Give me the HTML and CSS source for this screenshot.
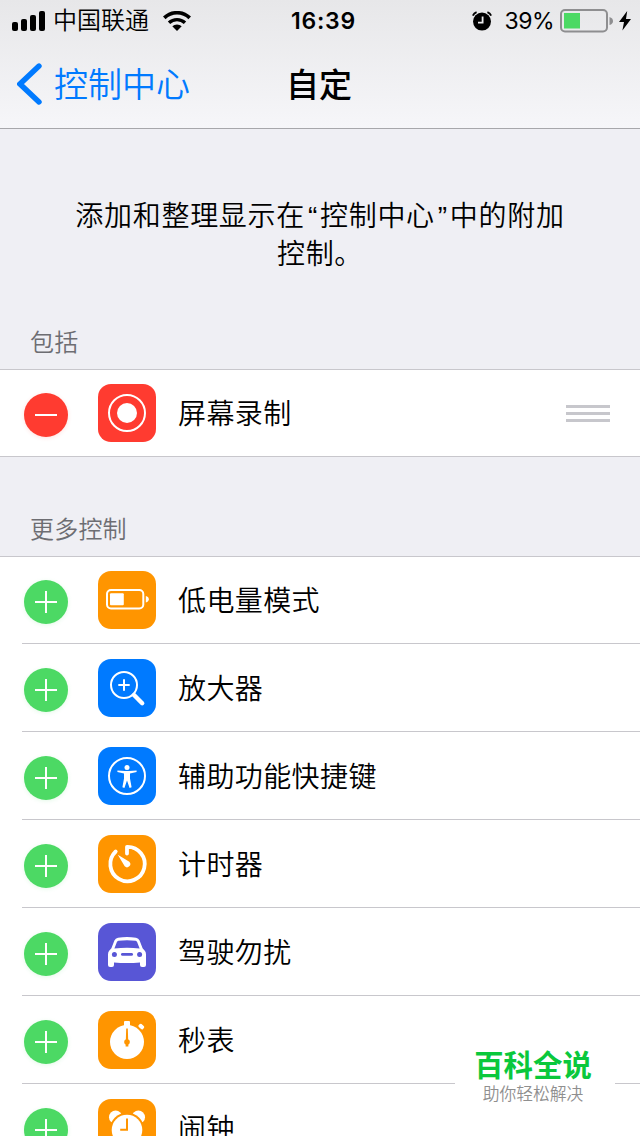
FILE: index.html
```html
<!DOCTYPE html>
<html lang="zh-CN">
<head>
    <meta charset="utf-8">
    <meta name="viewport" content="width=device-width, initial-scale=1.0">
    <title>自定</title>
    <link rel="stylesheet" href="styles.css">
</head>
<body>

<div class="header">
    <div class="status-bar">
        <div class="status-left">
            <svg class="signal" width="33" height="20" viewBox="0 0 33 20">
                <rect x="0" y="11" width="6" height="9" rx="2"/>
                <rect x="9" y="8" width="6" height="12" rx="2"/>
                <rect x="18" y="4" width="6" height="16" rx="2"/>
                <rect x="27" y="0" width="6" height="20" rx="2"/>
            </svg>
            <span class="carrier">中国联通</span>
            <svg class="wifi" width="28" height="20" viewBox="0 0 28 20">
                <path d="M1.3 6.9A18.2 18.2 0 0 1 26.7 6.9" fill="none" stroke="#000" stroke-width="3.7"/>
                <path d="M6 11.8A11.6 11.6 0 0 1 22 11.8" fill="none" stroke="#000" stroke-width="3.4"/>
                <path d="M9.3 15.3A6.8 6.8 0 0 1 18.7 15.3L14 20z"/>
            </svg>
        </div>
        <div class="time">16:39</div>
        <div class="status-right">
            <svg class="alarm" width="20" height="20" viewBox="0 0 20 20">
                <circle cx="10" cy="10.6" r="9"/>
                <path d="M.8 4.6Q2 2.2 4.6 1.2M19.2 4.6Q18 2.2 15.4 1.2" fill="none" stroke="#000" stroke-width="1.8"/>
                <path d="M10.6 5.5V11.6H6" fill="none" stroke="#ebebed" stroke-width="1.8"/>
            </svg>
            <span class="percent">39%</span>
            <svg class="battery" width="54" height="24" viewBox="0 0 54 24">
                <rect x="1" y="1" width="46" height="21.5" rx="4" fill="none" stroke="#8e8e90" stroke-width="2"/>
                <rect x="4" y="4" width="16" height="15.5" fill="#4cd964"/>
                <path d="M49.5 8Q53 9 53 12T49.5 16z" fill="#8e8e90"/>
            </svg>
            <svg class="bolt" width="12" height="20" viewBox="0 0 12 20">
                <path d="M8.2 0L0 11H5L3.4 19.5L12 8H7z"/>
            </svg>
        </div>
    </div>
    <div class="nav">
        <div class="back">
            <svg width="25" height="42" viewBox="0 0 25 42">
                <path d="M22 3L3 21L22 39" fill="none" stroke="#007aff" stroke-width="5.4" stroke-linecap="round"/>
            </svg>
            <span>控制中心</span>
        </div>
        <div class="title">自定</div>
    </div>
</div>

<p class="intro">添加和整理显示在<span class="quote">“</span>控制中心<span class="quote">”</span>中的附加<br>控制。</p>

<h2 class="group-title">包括</h2>
<div class="list">
    <div class="row">
        <svg class="toggle remove" viewBox="0 0 44 44"><path d="M11 22H33"/></svg>
        <svg class="icon red" viewBox="0 0 58 58">
            <circle class="line" cx="29" cy="29" r="18"/>
            <circle cx="29" cy="29" r="10"/>
        </svg>
        <span class="name">屏幕录制</span>
        <div class="handle"><i></i><i></i><i></i></div>
    </div>
</div>

<h2 class="group-title more">更多控制</h2>
<div class="list">
    <div class="row">
        <svg class="toggle" viewBox="0 0 44 44"><path d="M11 22H33M22 11V33"/></svg>
        <svg class="icon orange" viewBox="0 0 58 58">
            <rect class="line" x="9" y="19" width="36.3" height="18.4" rx="4"/>
            <rect x="12" y="22.2" width="13.8" height="12" rx="1"/>
            <path d="M47.8 25Q50.8 25.8 50.8 28.2T47.8 31.4z"/>
        </svg>
        <span class="name">低电量模式</span>
    </div>
    <div class="row">
        <svg class="toggle" viewBox="0 0 44 44"><path d="M11 22H33M22 11V33"/></svg>
        <svg class="icon blue" viewBox="0 0 58 58">
            <circle class="line" cx="26" cy="26" r="13"/>
            <path class="line" d="M20.3 26H31.7M26 20.3V31.7"/>
            <path class="grip" d="M36 36L44.2 44.2"/>
        </svg>
        <span class="name">放大器</span>
    </div>
    <div class="row">
        <svg class="toggle" viewBox="0 0 44 44"><path d="M11 22H33M22 11V33"/></svg>
        <svg class="icon blue" viewBox="0 0 58 58">
            <circle class="line" cx="29" cy="29" r="18"/>
            <circle cx="29" cy="20.4" r="2.5"/>
            <path d="M19.4 23.5L27 24.1H31L38.6 23.5V25.1L32 26.5V31.5L33.6 40.3L31.6 41L29 33.5L26.4 41L24.4 40.3L26 31.5V26.5L19.4 25.1z"/>
        </svg>
        <span class="name">辅助功能快捷键</span>
    </div>
    <div class="row">
        <svg class="toggle" viewBox="0 0 44 44"><path d="M11 22H33M22 11V33"/></svg>
        <svg class="icon orange" viewBox="0 0 58 58">
            <path class="line thick" d="M29 18.5V11.8A17.2 17.2 0 1 1 17.7 16.5"/>
            <path d="M19.8 19.8L31.3 26.7A3.2 3.2 0 0 1 26.7 31.3z"/>
        </svg>
        <span class="name">计时器</span>
    </div>
    <div class="row">
        <svg class="toggle" viewBox="0 0 44 44"><path d="M11 22H33M22 11V33"/></svg>
        <svg class="icon purple" viewBox="0 0 58 58">
            <path fill-rule="evenodd" d="M20 14.8Q29 13.4 38 14.8Q40.6 15.2 41.6 17.6L44.6 25.2L47 28Q48 29.5 48 31.4V42A2 2 0 0 1 46 44H44A2 2 0 0 1 42 42V39.4Q29 40.6 16 39.4V42A2 2 0 0 1 14 44H12A2 2 0 0 1 10 42V31.4Q10 29.5 11 28L13.4 25.2L16.4 17.6Q17.4 15.2 20 14.8zM20.4 17.8Q19.3 18 18.9 19L16.4 25.6Q29 23.8 41.6 25.6L39.1 19Q38.7 18 37.6 17.8Q29 16.6 20.4 17.8z"/>
            <g fill="#5856d6">
                <circle cx="16.4" cy="31.4" r="2.5"/>
                <circle cx="41.6" cy="31.4" r="2.5"/>
                <rect x="23" y="30" width="12" height="2.8" rx="1.4"/>
            </g>
        </svg>
        <span class="name">驾驶勿扰</span>
    </div>
    <div class="row">
        <svg class="toggle" viewBox="0 0 44 44"><path d="M11 22H33M22 11V33"/></svg>
        <svg class="icon orange" viewBox="0 0 58 58">
            <circle cx="29" cy="31" r="17"/>
            <rect x="26" y="10" width="6" height="6" rx="1"/>
            <rect x="40.4" y="13.6" width="5.8" height="4" rx="1.4" transform="rotate(42 43.3 15.6)"/>
            <g fill="#ff9500">
                <path d="M28.2 17.5H29.8L30.4 35.5H27.6z"/>
                <circle cx="29" cy="31" r="2.8"/>
            </g>
        </svg>
        <span class="name">秒表</span>
    </div>
    <div class="row">
        <svg class="toggle" viewBox="0 0 44 44"><path d="M11 22H33M22 11V33"/></svg>
        <svg class="icon orange" viewBox="0 0 58 58">
            <circle cx="17.6" cy="18.2" r="6.6"/>
            <circle cx="40.4" cy="18.2" r="6.6"/>
            <circle cx="29" cy="31" r="17.4" fill="#ff9500"/>
            <circle cx="29" cy="31" r="15.3"/>
            <path d="M29 19.5V30.7H22.2" fill="none" stroke="#ff9500" stroke-width="2"/>
        </svg>
        <span class="name">闹钟</span>
    </div>
</div>

<div class="watermark">
    <div class="watermark-title">百科全说</div>
    <div class="watermark-text">助你轻松解决</div>
</div>

</body>
</html>
```

FILE: styles.css
```css
body {
    font-family: Inter, "Noto Sans CJK SC", sans-serif;
    font-weight: 350;
    margin: 0;
    position: relative;
    width: 640px;
    height: 1136px;
    overflow: hidden;
    background: #efeff4;
    color: #000;
}
.header {
    box-sizing: border-box;
    height: 129px;
    background: linear-gradient(#e7e7e9, #f6f6f9);
    border-bottom: 1px solid #a7a7ab;
}
.status-bar {
    display: grid;
    grid-template-columns: 1fr auto 1fr;
    align-items: center;
    height: 40px;
    padding: 0 9px 0 12px;
}
.status-left, .status-right {
    display: flex;
    align-items: center;
}
.status-right {
    justify-content: flex-end;
}
.carrier {
    margin: 0 14px 0 8px;
    font-size: 24px;
    line-height: 42px;
}
.time {
    font-size: 23px;
    font-weight: 600;
    letter-spacing: 0.8px;
    line-height: 42px;
    padding-left: 4px;
}
.percent {
    margin: 0 6px 0 12px;
    font-size: 23px;
    font-weight: 400;
    letter-spacing: -0.5px;
    line-height: 42px;
}
.battery {
    margin-right: 5px;
}
.nav {
    display: grid;
    grid-template-columns: 1fr auto 1fr;
    align-items: center;
    height: 88px;
    padding: 0 18px 0 17px;
}
.back {
    display: flex;
    align-items: center;
    gap: 12px;
    color: #007aff;
    font-size: 34px;
}
.back span {
    padding-top: 2px;
    line-height: 86px;
}
.title {
    padding: 0 1px 2px 0;
    font-size: 33px;
    font-weight: 500;
}
.intro {
    margin: 68px 0 0;
    text-align: center;
    font-size: 28px;
    letter-spacing: 0.7px;
    line-height: 38px;
}
.quote {
    padding: 0 2px 0 3px;
    font-family: "Liberation Sans", sans-serif;
    line-height: 1;
}
.group-title {
    box-sizing: border-box;
    height: 96px;
    margin: 0;
    padding: 52px 30px 0;
    color: #6d6d72;
    font-size: 24px;
    font-weight: 350;
    letter-spacing: 0.2px;
    line-height: 36px;
}
.group-title.more {
    height: 99px;
    padding-top: 55px;
}
.list {
    background: #fff;
    border-top: 1px solid #c8c7cc;
}
.row {
    box-sizing: border-box;
    display: flex;
    align-items: center;
    height: 88px;
    padding: 0 30px 0 24px;
    background: linear-gradient(#c8c7cc, #c8c7cc) no-repeat 22px 100% / 100% 1px;
}
/* the list's top border counts as part of the first row */
.row:first-child {
    height: 87px;
    padding-bottom: 1px;
}
.row:only-child {
    background-position: 0 100%;
}
.toggle {
    width: 44px;
    height: 44px;
    margin: 4px 30px 0 0;
    border-radius: 50%;
    background: #4cd964;
    box-shadow: 0 1px 4px rgba(76, 217, 100, 0.15);
    stroke: #fff;
    stroke-width: 2;
}
.toggle.remove {
    background: #ff3b30;
    box-shadow: 0 1px 4px rgba(255, 59, 48, 0.15);
}
.icon {
    width: 58px;
    height: 58px;
    margin-right: 22px;
    border-radius: 13px;
    fill: #fff;
}
.icon .line {
    fill: none;
    stroke: #fff;
    stroke-width: 2;
}
.icon .thick {
    stroke-width: 3.8;
    stroke-linecap: round;
    stroke-linejoin: round;
}
.icon .grip {
    stroke: #fff;
    stroke-width: 4.4;
    stroke-linecap: round;
}
.red { background: #ff3b30; }
.orange { background: #ff9500; }
.blue { background: #007aff; }
.purple { background: #5856d6; }
.name {
    padding-top: 2px;
    font-size: 28px;
    letter-spacing: 0.4px;
    line-height: 40px;
}
.handle {
    display: flex;
    flex-direction: column;
    gap: 4px;
    width: 44px;
    margin-left: auto;
}
.handle i {
    height: 3px;
    background: #c7c7cc;
}
.watermark {
    position: absolute;
    left: 455px;
    top: 1040px;
    box-sizing: border-box;
    width: 160px;
    height: 72px;
    padding-right: 4px;
    background: #fff;
    text-align: center;
}
.watermark-title {
    margin-top: 8px;
    color: #0ac83c;
    font-size: 29.4px;
    font-weight: 700;
    line-height: 36px;
}
.watermark-text {
    color: #8f8f8f;
    font-size: 16.8px;
    line-height: 20px;
}
```
